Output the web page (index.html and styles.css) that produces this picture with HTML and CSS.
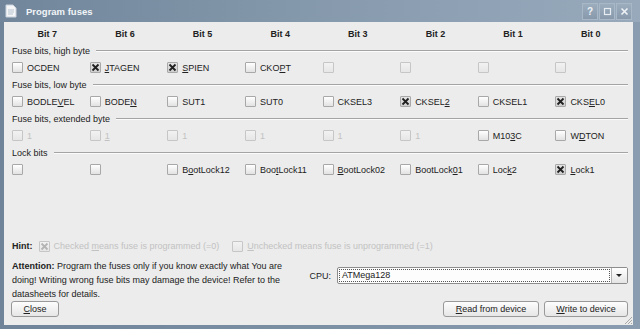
FILE: index.html
```html
<!DOCTYPE html>
<html lang="en">
<head>
  <meta charset="UTF-8" />
  <title>Program fuses</title>
  <link rel="stylesheet" href="styles.css">
</head>
<body>
  <div class="window">
    <div class="titlebar">
      <svg class="app-icon" width="12" height="14" viewBox="0 0 12 14">
        <path d="M1 1 H8 L11 4 V13 H1 Z" fill="#f4f6f8" stroke="#c9d2db" stroke-width="1"/>
        <path d="M3 6 H9 M3 8 H9 M3 10 H8" stroke="#b8c3ce" stroke-width="1"/>
      </svg>
      <span class="title">Program fuses</span>
      <div class="wm-buttons">
        <span class="wm-btn">?</span>
        <span class="wm-btn"><svg width="9" height="9" viewBox="0 0 9 9"><rect x="1.5" y="1.5" width="6" height="6" fill="none" stroke="#e8edf2" stroke-width="1.2"/></svg></span>
        <span class="wm-btn"><svg width="9" height="9" viewBox="0 0 9 9"><path d="M1.5 1.5 L7.5 7.5 M7.5 1.5 L1.5 7.5" stroke="#eef2f6" stroke-width="1.6"/></svg></span>
      </div>
    </div>

    <div class="content">
      <div class="bits">
        <div class="bits-head">
          <span>Bit 7</span><span>Bit 6</span><span>Bit 5</span><span>Bit 4</span>
          <span>Bit 3</span><span>Bit 2</span><span>Bit 1</span><span>Bit 0</span>
        </div>

        <div class="group-label"><span>Fuse bits, high byte</span></div>
        <div class="bits-row">
          <label class="check"><span class="box"></span><span>OCDEN</span></label>
          <label class="check"><span class="box checked"><svg width="9" height="9" viewBox="0 0 9 9"><path d="M1.5 1.5 L7.5 7.5 M7.5 1.5 L1.5 7.5"/></svg></span><span><u>J</u>TAGEN</span></label>
          <label class="check"><span class="box checked"><svg width="9" height="9" viewBox="0 0 9 9"><path d="M1.5 1.5 L7.5 7.5 M7.5 1.5 L1.5 7.5"/></svg></span><span><u>S</u>PIEN</span></label>
          <label class="check"><span class="box"></span><span>CKO<u>P</u>T</span></label>
          <label class="check disabled"><span class="box"></span></label>
          <label class="check disabled"><span class="box"></span></label>
          <label class="check disabled"><span class="box"></span></label>
          <label class="check disabled"><span class="box"></span></label>
        </div>

        <div class="group-label"><span>Fuse bits, low byte</span></div>
        <div class="bits-row">
          <label class="check"><span class="box"></span><span>BODLE<u>V</u>EL</span></label>
          <label class="check"><span class="box"></span><span>BODE<u>N</u></span></label>
          <label class="check"><span class="box"></span><span>SUT1</span></label>
          <label class="check"><span class="box"></span><span>SUT0</span></label>
          <label class="check"><span class="box"></span><span>CKSEL3</span></label>
          <label class="check"><span class="box checked"><svg width="9" height="9" viewBox="0 0 9 9"><path d="M1.5 1.5 L7.5 7.5 M7.5 1.5 L1.5 7.5"/></svg></span><span>CKSEL<u>2</u></span></label>
          <label class="check"><span class="box"></span><span>CKSEL1</span></label>
          <label class="check"><span class="box checked"><svg width="9" height="9" viewBox="0 0 9 9"><path d="M1.5 1.5 L7.5 7.5 M7.5 1.5 L1.5 7.5"/></svg></span><span>CKS<u>E</u>L0</span></label>
        </div>

        <div class="group-label"><span>Fuse bits, extended byte</span></div>
        <div class="bits-row">
          <label class="check disabled"><span class="box"></span><span>1</span></label>
          <label class="check disabled"><span class="box"></span><span><u>1</u></span></label>
          <label class="check disabled"><span class="box"></span><span>1</span></label>
          <label class="check disabled"><span class="box"></span><span>1</span></label>
          <label class="check disabled"><span class="box"></span><span>1</span></label>
          <label class="check disabled"><span class="box"></span><span>1</span></label>
          <label class="check"><span class="box"></span><span>M10<u>3</u>C</span></label>
          <label class="check"><span class="box"></span><span>W<u>D</u>TON</span></label>
        </div>

        <div class="group-label"><span>Lock bits</span></div>
        <div class="bits-row">
          <label class="check"><span class="box"></span></label>
          <label class="check"><span class="box"></span></label>
          <label class="check"><span class="box"></span><span>B<u>o</u>otLock12</span></label>
          <label class="check"><span class="box"></span><span>Boo<u>t</u>Lock11</span></label>
          <label class="check"><span class="box"></span><span><u>B</u>ootLock02</span></label>
          <label class="check"><span class="box"></span><span>BootLock<u>0</u>1</span></label>
          <label class="check"><span class="box"></span><span>Loc<u>k</u>2</span></label>
          <label class="check"><span class="box checked"><svg width="9" height="9" viewBox="0 0 9 9"><path d="M1.5 1.5 L7.5 7.5 M7.5 1.5 L1.5 7.5"/></svg></span><span><u>L</u>ock1</span></label>
        </div>
      </div>

      <div class="hint">
        <b>Hint:</b>
        <label class="check disabled"><span class="box checked"><svg width="9" height="9" viewBox="0 0 9 9"><path d="M1.5 1.5 L7.5 7.5 M7.5 1.5 L1.5 7.5"/></svg></span><span>Checked <u>m</u>eans fuse is programmed (=0)</span></label>
        <label class="check disabled"><span class="box"></span><span><u>U</u>nchecked means fuse is unprogrammed (=1)</span></label>
      </div>

      <div class="attention-row">
        <p class="attention"><b>Attention:</b> Program the fuses only if you know exactly what You are<br>doing! Writing wrong fuse bits may damage the device! Refer to the<br>datasheets for details.</p>
        <div class="cpu">
          <span>CPU:</span>
          <div class="combo">
            <span class="combo-text">ATMega128</span>
            <span class="combo-btn"></span>
          </div>
        </div>
      </div>

      <div class="buttons-row">
        <button class="btn btn-close"><u>C</u>lose</button>
        <div class="btn-group">
          <button class="btn btn-read"><u>R</u>ead from device</button>
          <button class="btn btn-write"><u>W</u>rite to device</button>
        </div>
      </div>

      <svg class="grip" width="9" height="9" viewBox="0 0 9 9">
        <path d="M8 1 L1 8 M8 4 L4 8 M8 7 L7 8" stroke="#a8a8a8" stroke-width="1"/>
      </svg>
    </div>
  </div>
</body>
</html>
```

FILE: styles.css
```css
body {
  margin: 0;
  font-family: "Liberation Sans", Arial, sans-serif;
  font-size: 9px;
  color: #222;
  background-color: #7d91a6;
}

.window {
  width: 640px;
  height: 329px;
  display: flex;
  flex-direction: column;
  box-sizing: border-box;
  padding: 0 7px 4px 4px;
  background: linear-gradient(to right, #6f8499, #8a9db0);
}

.titlebar {
  height: 22px;
  display: flex;
  align-items: center;
  margin-left: -4px;
  margin-right: -7px;
  padding-left: 5px;
  background: linear-gradient(to right, #71869b, #8ea1b4 70%, #97a9bb);
}

.app-icon {
  margin-right: 9px;
}

.title {
  color: #f2f5f8;
  font-weight: bold;
  font-size: 9.5px;
}

.wm-buttons {
  margin-left: auto;
  margin-right: 8px;
  display: flex;
  gap: 1px;
}

.wm-btn {
  width: 14px;
  height: 15px;
  display: flex;
  align-items: center;
  justify-content: center;
  border: 1px solid #a9b8c6;
  background: linear-gradient(#9cadbe, #8799ab);
  color: #eef2f6;
  font-weight: bold;
  font-size: 10px;
}

.content {
  flex: 1;
  position: relative;
  display: flex;
  flex-direction: column;
  background-color: #ececec;
  padding: 3px 5px 8px 7px;
}

.bits-head,
.bits-row {
  display: grid;
  grid-template-columns: repeat(8, 1fr);
  margin-left: 1px;
  margin-right: -5px;
  height: 17px;
  align-items: center;
}

.bits-head span {
  text-align: center;
  font-weight: bold;
  padding-right: 7px;
}

.group-label {
  height: 17px;
  display: flex;
  align-items: center;
  gap: 6px;
  padding-left: 1px;
}

.group-label::after {
  content: "";
  flex: 1;
  border-top: 1px solid #a4a4a4;
  border-bottom: 1px solid #fbfbfb;
}

.check {
  display: flex;
  align-items: center;
  gap: 4px;
  white-space: nowrap;
}

.box {
  width: 11px;
  height: 11px;
  box-sizing: border-box;
  display: flex;
  align-items: center;
  justify-content: center;
  border: 1px solid #a8a8a8;
  border-radius: 1px;
  background: linear-gradient(#ffffff, #e2e2e2);
}

.box.checked {
  background: linear-gradient(#e4e4e4, #cfcfcf);
}

.box svg path {
  stroke: #202020;
  stroke-width: 1.8;
}

.disabled {
  color: #c2c2c2;
}

.disabled .box {
  border-color: #c6c6c6;
  background: linear-gradient(#f2f2f2, #e6e6e6);
}

.disabled .box svg path {
  stroke: #b4b4b4;
}

.hint {
  margin-top: auto;
  display: flex;
  align-items: center;
  height: 14px;
  padding-left: 1px;
}

.hint b {
  margin-right: 6px;
}

.hint .check + .check {
  margin-left: 13px;
}

.attention-row {
  display: flex;
  align-items: flex-start;
  margin-top: 6px;
}

.attention {
  margin: 0;
  padding-left: 1px;
  line-height: 14px;
  width: 292px;
}

.cpu {
  margin-left: auto;
  margin-top: 8px;
  display: flex;
  align-items: center;
  gap: 6px;
}

.combo {
  width: 291px;
  height: 17px;
  box-sizing: border-box;
  display: flex;
  border: 1px solid #8d8d8d;
  border-radius: 2px;
  background: #fdfdfd;
}

.combo-text {
  flex: 1;
  margin: 1px;
  padding-left: 2px;
  border: 1px dotted #555;
  line-height: 11px;
}

.combo-btn {
  width: 15px;
  position: relative;
  border-left: 1px solid #b3b3b3;
  background: linear-gradient(#ffffff, #e4e4e4);
}

.combo-btn::after {
  content: "";
  position: absolute;
  left: 4px;
  top: 6px;
  border-left: 3px solid transparent;
  border-right: 3px solid transparent;
  border-top: 3px solid #222;
}

.buttons-row {
  display: flex;
  justify-content: space-between;
}

.btn-group {
  display: flex;
  gap: 5px;
}

.btn {
  height: 16px;
  padding: 0;
  font-family: inherit;
  font-size: 9px;
  color: #222;
  border: 1px solid #999;
  border-radius: 3px;
  background: linear-gradient(#fdfdfd, #e6e6e6);
}

.btn-close {
  width: 48px;
}

.btn-read {
  width: 96px;
}

.btn-write {
  width: 84px;
}

.grip {
  position: absolute;
  right: 0;
  bottom: 0;
}
```
